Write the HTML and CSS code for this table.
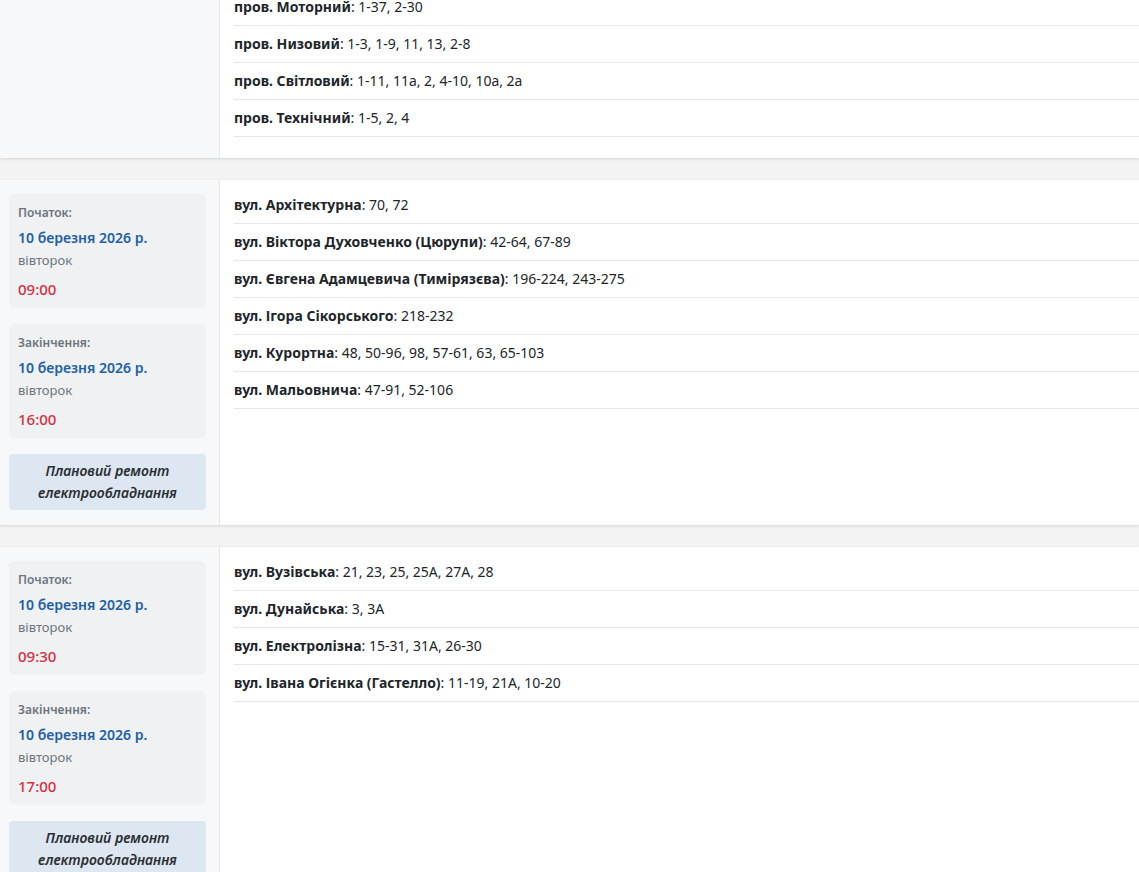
FILE: index.html
```html
<!DOCTYPE html>
<html lang="uk">
<head>
<meta charset="utf-8">
<link rel="stylesheet" href="styles.css">
</head>
<body>
<div class="page">
  <section class="card card-first">
    <aside class="side"></aside>
    <ul class="streets">
      <li><b>пров. Моторний</b>: 1-37, 2-30</li>
      <li><b>пров. Низовий</b>: 1-3, 1-9, 11, 13, 2-8</li>
      <li><b>пров. Світловий</b>: 1-11, 11а, 2, 4-10, 10а, 2а</li>
      <li><b>пров. Технічний</b>: 1-5, 2, 4</li>
    </ul>
  </section>

  <section class="card">
    <aside class="side">
      <div class="time-box">
        <div class="label">Початок:</div>
        <div class="date">10 березня 2026 р.</div>
        <div class="day">вівторок</div>
        <div class="time">09:00</div>
      </div>
      <div class="time-box">
        <div class="label">Закінчення:</div>
        <div class="date">10 березня 2026 р.</div>
        <div class="day">вівторок</div>
        <div class="time">16:00</div>
      </div>
      <div class="reason">Плановий ремонт електрообладнання</div>
    </aside>
    <ul class="streets">
      <li><b>вул. Архітектурна</b>: 70, 72</li>
      <li><b>вул. Віктора Духовченко (Цюрупи)</b>: 42-64, 67-89</li>
      <li><b>вул. Євгена Адамцевича (Тимірязєва)</b>: 196-224, 243-275</li>
      <li><b>вул. Ігора Сікорського</b>: 218-232</li>
      <li><b>вул. Курортна</b>: 48, 50-96, 98, 57-61, 63, 65-103</li>
      <li><b>вул. Мальовнича</b>: 47-91, 52-106</li>
    </ul>
  </section>

  <section class="card">
    <aside class="side">
      <div class="time-box">
        <div class="label">Початок:</div>
        <div class="date">10 березня 2026 р.</div>
        <div class="day">вівторок</div>
        <div class="time">09:30</div>
      </div>
      <div class="time-box">
        <div class="label">Закінчення:</div>
        <div class="date">10 березня 2026 р.</div>
        <div class="day">вівторок</div>
        <div class="time">17:00</div>
      </div>
      <div class="reason">Плановий ремонт електрообладнання</div>
    </aside>
    <ul class="streets">
      <li><b>вул. Вузівська</b>: 21, 23, 25, 25А, 27А, 28</li>
      <li><b>вул. Дунайська</b>: 3, 3А</li>
      <li><b>вул. Електролізна</b>: 15-31, 31А, 26-30</li>
      <li><b>вул. Івана Огієнка (Гастелло)</b>: 11-19, 21А, 10-20</li>
    </ul>
  </section>
</div>
</body>
</html>
```

FILE: styles.css
```css
html, body {
  margin: 0;
  padding: 0;
  background: #f3f3f3;
  font-family: "Noto Sans", "Open Sans", sans-serif;
  color: #212529;
  overflow: hidden;
}

.page {
  display: flex;
  flex-direction: column;
  gap: 22px;
}

.card {
  display: flex;
  background: #ffffff;
  box-shadow: 0 1px 3px rgba(0, 0, 0, 0.12);
}

.card-first {
  margin-top: -18px;
}

.card-first .streets {
  padding-bottom: 21px;
}

.side {
  width: 197px;
  flex: none;
  background: #f7f8fa;
  border-right: 1px solid #e3e6ea;
  padding: 14px 13px 15px 9px;
  display: flex;
  flex-direction: column;
  gap: 16px;
}

.time-box {
  background: #eff1f3;
  border-radius: 5px;
  padding: 10px 9px 8px;
}

.label {
  font-size: 12px;
  line-height: 18px;
  font-weight: 600;
  color: #6c757d;
  margin-bottom: 6px;
}

.date {
  font-size: 14px;
  line-height: 20px;
  font-weight: 600;
  color: #1b60a8;
  margin-bottom: 2px;
}

.day {
  font-size: 13px;
  line-height: 20px;
  color: #6c757d;
  margin-bottom: 8px;
}

.time {
  font-size: 15px;
  line-height: 22px;
  font-weight: 500;
  color: #d3303f;
}

.reason {
  background: #dde7f2;
  border-radius: 4px;
  padding: 6px 8px;
  text-align: center;
  font-size: 14px;
  line-height: 22px;
  font-style: italic;
  font-weight: 600;
  color: #2b2f33;
}

.streets {
  list-style: none;
  margin: 0;
  padding: 7px 0 22px 14px;
  flex: 1;
  align-self: flex-start;
}

.streets li {
  font-size: 14px;
  line-height: 20px;
  padding: 8px 0;
  border-bottom: 1px solid #e6e6e6;
  white-space: nowrap;
}

.streets b {
  font-weight: 700;
}
```
